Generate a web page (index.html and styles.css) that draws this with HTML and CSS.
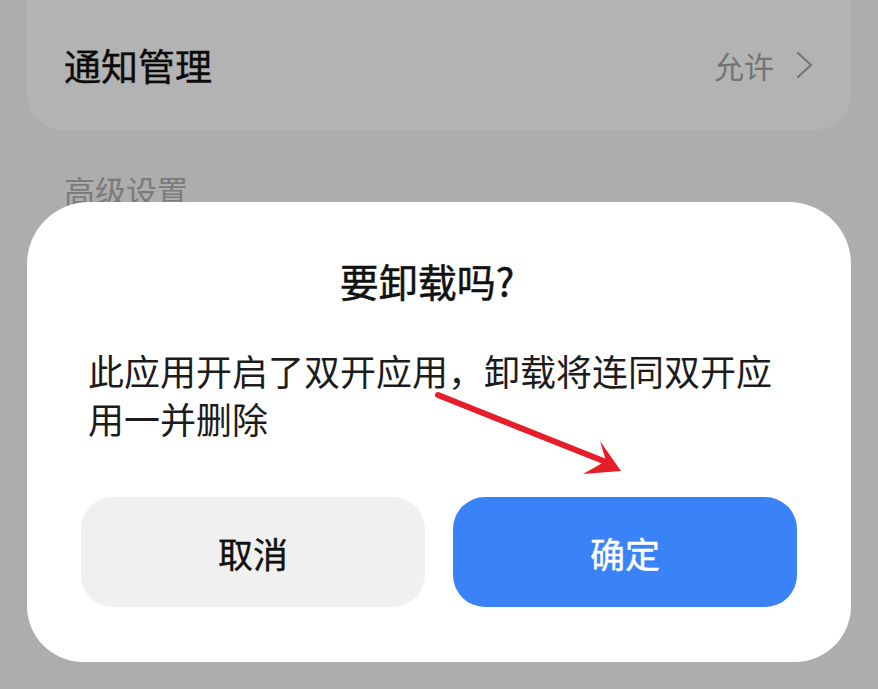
FILE: index.html
```html
<!DOCTYPE html>
<html lang="zh-CN">

<head>
    <meta charset="UTF-8">
    <meta name="viewport" content="width=device-width, initial-scale=1.0">
    <title>卸载确认</title>
    <link rel="stylesheet" href="styles.css">
</head>

<body>
    <div class="page">
        <!-- Settings list behind the dialog -->
        <div class="card">
            <div class="row">
                <span class="row-title">通知管理</span>
                <span class="row-value">
                    允许
                    <svg class="chevron" width="18" height="28" viewBox="0 0 18 28">
                        <path d="M2 2 L15 14 L2 26" fill="none" stroke="#767676" stroke-width="2.2" stroke-linecap="round" stroke-linejoin="round"/>
                    </svg>
                </span>
            </div>
        </div>

        <h3 class="section-title">高级设置</h3>

        <!-- Uninstall dialog -->
        <div class="dialog">
            <h2 class="dialog-title">要卸载吗?</h2>
            <p class="dialog-text">此应用开启了双开应用，卸载将连同双开应用一并删除</p>
            <div class="dialog-buttons">
                <button class="btn btn-cancel">取消</button>
                <button class="btn btn-ok">确定</button>
            </div>
        </div>

        <!-- Red annotation arrow -->
        <svg class="annotation" width="878" height="689" viewBox="0 0 878 689">
            <line x1="438" y1="395" x2="606" y2="462" stroke="#e61e2b" stroke-width="6" stroke-linecap="round"/>
            <polygon points="621,471 600,441 606,461 583,474" fill="#e61e2b"/>
        </svg>
    </div>
</body>

</html>
```

FILE: styles.css
```css
body {
    margin: 0;
    padding: 0;
    background: #adadad;
    font-family: "Noto Sans CJK SC", "Noto Sans", sans-serif;
}

.page {
    position: relative;
    width: 878px;
    height: 689px;
    overflow: hidden;
}

.card {
    margin: -40px 27px 0;
    padding-top: 40px;
    background: #b3b3b3;
    border-radius: 36px;
}

.row {
    height: 130px;
    padding: 0 37px;
    display: flex;
    align-items: center;
    justify-content: space-between;
}

.row-title {
    font-size: 37px;
    color: #0b0b0b;
    -webkit-text-stroke: 0.4px #0b0b0b;
}

.row-value {
    display: flex;
    align-items: center;
    gap: 22px;
    font-size: 30px;
    color: #747474;
}

.section-title {
    margin: 40px 0 0 64px;
    font-size: 31px;
    font-weight: 400;
    line-height: 40px;
    color: #7b7b7b;
}

.dialog {
    position: absolute;
    left: 27px;
    top: 202px;
    width: 824px;
    height: 460px;
    box-sizing: border-box;
    padding: 53px 54px 55px;
    background: #fff;
    border-radius: 62px 62px 56px 56px;
}

.dialog-title {
    margin: 0;
    padding-right: 24px;
    text-align: center;
    font-size: 39px;
    font-weight: 400;
    line-height: 50px;
    color: #111;
    -webkit-text-stroke: 0.5px #111;
}

.dialog-text {
    margin: 41px 0 0;
    padding: 0 0 0 7px;
    font-size: 36px;
    line-height: 48px;
    color: #1c1c1c;
}

.dialog-buttons {
    display: flex;
    gap: 28px;
    margin-top: 55px;
}

.btn {
    flex: 1;
    height: 110px;
    border: none;
    border-radius: 32px;
    font-family: inherit;
    font-size: 35px;
    font-weight: 400;
    -webkit-text-stroke: 0.4px currentColor;
}

.btn-cancel {
    background: #f0f0f0;
    color: #111;
}

.btn-ok {
    background: #3a82f7;
    color: #fff;
}

.annotation {
    position: absolute;
    left: 0;
    top: 0;
    pointer-events: none;
}
```
